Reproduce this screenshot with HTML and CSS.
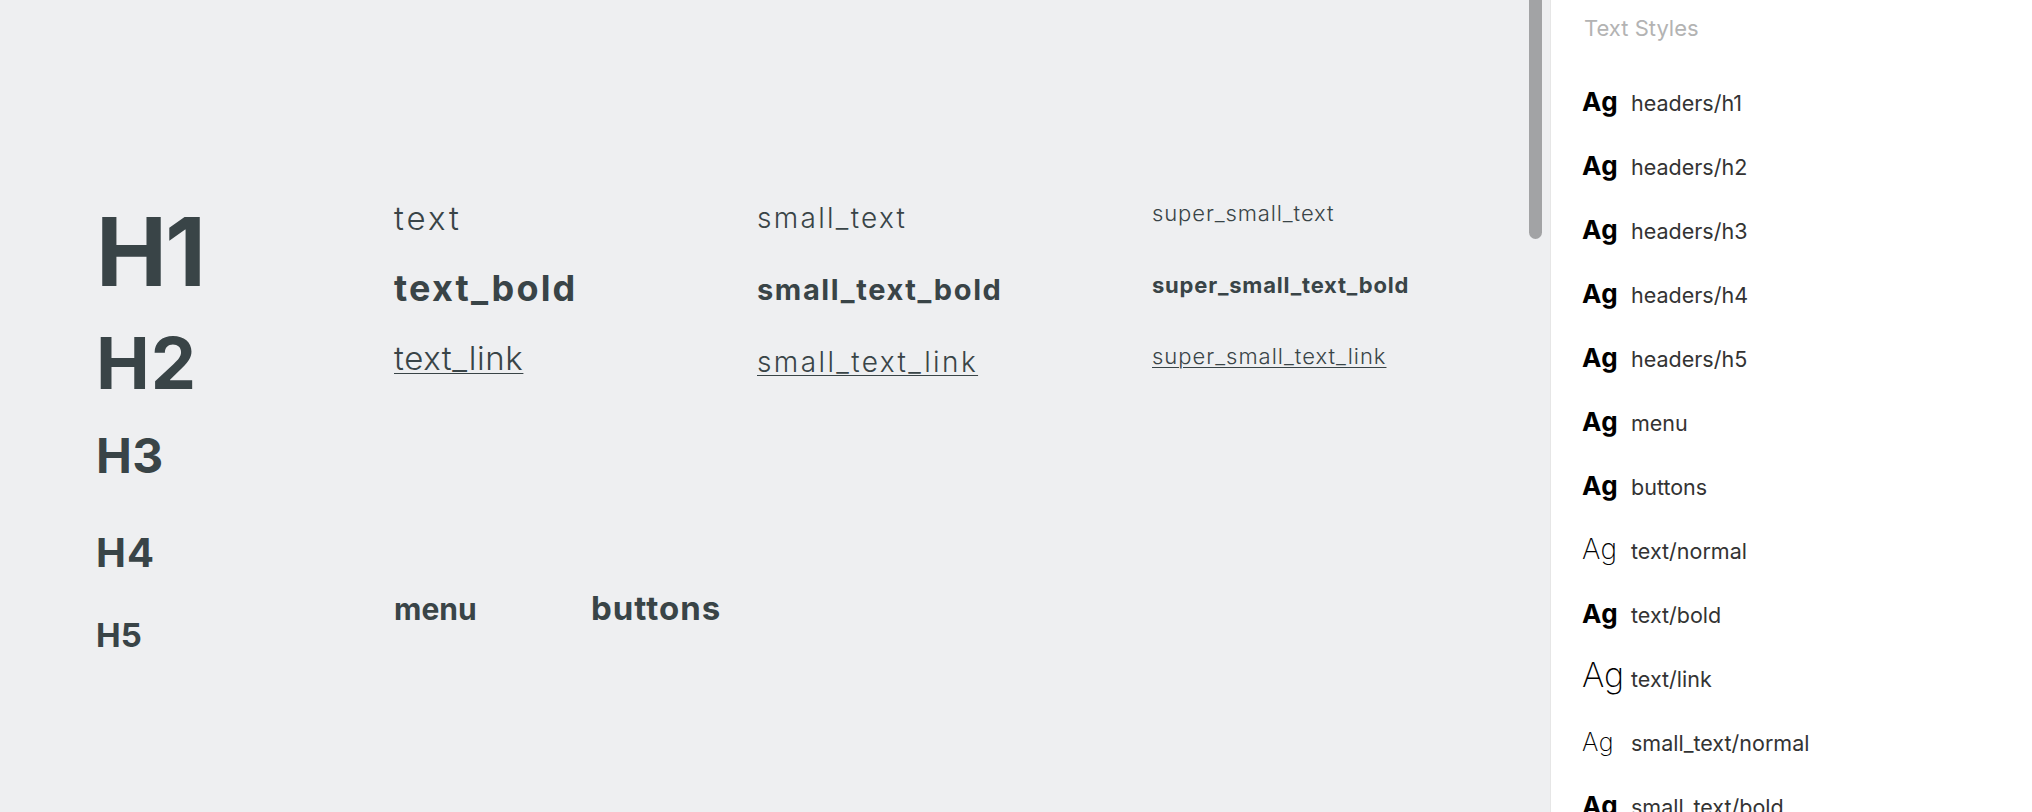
FILE: index.html
```html
<!DOCTYPE html>
<html lang="en">
<head>
<meta charset="utf-8">
<title>Text Styles</title>
<link rel="stylesheet" href="styles.css">
</head>
<body>
<div class="app">
  <main class="canvas">
    <div class="headings">
      <div class="h h1">H1</div>
      <div class="h h2">H2</div>
      <div class="h h3">H3</div>
      <div class="h h4">H4</div>
      <div class="h h5">H5</div>
    </div>
    <div class="body-styles">
      <div class="grid">
        <div class="col col-text">
          <div class="t-normal">text</div>
          <div class="t-bold">text_bold</div>
          <div class="t-link">text_link</div>
        </div>
        <div class="col col-small">
          <div class="s-normal">small_text</div>
          <div class="s-bold">small_text_bold</div>
          <div class="s-link">small_text_link</div>
        </div>
        <div class="col col-super">
          <div class="ss-normal">super_small_text</div>
          <div class="ss-bold">super_small_text_bold</div>
          <div class="ss-link">super_small_text_link</div>
        </div>
      </div>
      <div class="actions">
        <div class="menu">menu</div>
        <div class="buttons">buttons</div>
      </div>
    </div>
    <div class="scroll-thumb"></div>
  </main>
  <aside class="panel">
    <div class="panel-title">Text Styles</div>
    <ul class="style-list">
      <li class="style-row"><span class="ag ag-bold">Ag</span><span class="label">headers/h1</span></li>
      <li class="style-row"><span class="ag ag-bold">Ag</span><span class="label">headers/h2</span></li>
      <li class="style-row"><span class="ag ag-bold">Ag</span><span class="label">headers/h3</span></li>
      <li class="style-row"><span class="ag ag-bold">Ag</span><span class="label">headers/h4</span></li>
      <li class="style-row"><span class="ag ag-bold">Ag</span><span class="label">headers/h5</span></li>
      <li class="style-row"><span class="ag ag-bold">Ag</span><span class="label">menu</span></li>
      <li class="style-row"><span class="ag ag-bold">Ag</span><span class="label">buttons</span></li>
      <li class="style-row"><span class="ag ag-light">Ag</span><span class="label">text/normal</span></li>
      <li class="style-row"><span class="ag ag-bold">Ag</span><span class="label">text/bold</span></li>
      <li class="style-row"><span class="ag ag-light ag-large">Ag</span><span class="label">text/link</span></li>
      <li class="style-row"><span class="ag ag-light ag-small">Ag</span><span class="label">small_text/normal</span></li>
      <li class="style-row"><span class="ag ag-bold">Ag</span><span class="label">small_text/bold</span></li>
    </ul>
  </aside>
</div>
</body>
</html>
```

FILE: styles.css
```css
* { box-sizing: border-box; }
html, body { margin: 0; padding: 0; }
body {
  width: 2032px;
  height: 812px;
  overflow: hidden;
  font-family: "Inter", "Noto Sans", sans-serif;
}
.app {
  display: flex;
  height: 812px;
}

/* ---------- canvas ---------- */
.canvas {
  position: relative;
  width: 1550px;
  flex: none;
  height: 812px;
  background: #eeeff1;
  color: #394447;
  display: flex;
  padding-left: 96px;
}
.headings {
  width: 298px;
  flex: none;
  padding-top: 204px;
  font-weight: 700;
}
.h { line-height: 1; }
.h1 { font-size: 95px; letter-spacing: -2px; }
.h2 { font-size: 72px; margin-top: 28px; letter-spacing: 1px; }
.h3 { font-size: 48px; margin-top: 33px; letter-spacing: 0.5px; }
.h4 { font-size: 40px; margin-top: 53px; letter-spacing: 1px; }
.h5 { font-size: 33px; margin-top: 46px; letter-spacing: 0; }

.body-styles {
  flex: 1;
  padding-top: 176px;
}
.grid {
  display: grid;
  grid-template-columns: 363px 395px 1fr;
}
.col { display: flex; flex-direction: column; }
.col-text { padding-top: 7px; line-height: 70px; }
.col-small { padding-top: 6px; line-height: 72px; }
.col-super { padding-top: 2px; line-height: 71.5px; }

.t-normal { font-size: 33px; font-weight: 300; letter-spacing: 3px; }
.t-link { font-size: 33px; font-weight: 300; letter-spacing: 0.6px; }
.t-bold { font-size: 36px; font-weight: 700; letter-spacing: 2.2px; }
.s-normal { font-size: 28px; font-weight: 300; letter-spacing: 2.3px; }
.s-link { font-size: 28px; font-weight: 300; letter-spacing: 2.4px; }
.s-bold { font-size: 29px; font-weight: 700; letter-spacing: 1.6px; }
.ss-normal { font-size: 22px; font-weight: 300; letter-spacing: 0.9px; }
.ss-link { font-size: 22px; font-weight: 300; letter-spacing: 1px; }
.ss-bold { font-size: 22px; font-weight: 700; letter-spacing: 0.8px; }
.t-link, .s-link, .ss-link {
  text-decoration: underline;
  text-decoration-thickness: 1px;
  text-underline-offset: 3px;
}

.actions {
  display: grid;
  grid-template-columns: 197px auto;
  align-items: baseline;
  margin-top: 194px;
  font-weight: 700;
  line-height: 1;
}
.menu { font-size: 30px; }
.buttons { font-size: 33px; letter-spacing: 1px; }

.scroll-thumb {
  position: absolute;
  top: -10px;
  left: 1529px;
  width: 13px;
  height: 249px;
  border-radius: 7px;
  background: #a2a3a5;
}

/* ---------- panel ---------- */
.panel {
  flex: 1;
  height: 812px;
  background: #ffffff;
  border-left: 1px solid #e6e6e6;
  padding-left: 31px;
  overflow: hidden;
}
.panel-title {
  padding-top: 16px;
  padding-left: 2px;
  font-size: 22px;
  line-height: 24px;
  color: #b3b3b3;
}
.style-list {
  list-style: none;
  margin: 31px 0 0;
  padding: 0;
}
.style-row {
  height: 64px;
  line-height: 64px;
  font-size: 21.5px;
  color: #333333;
  white-space: nowrap;
}
.ag {
  display: inline-block;
  width: 49px;
  line-height: 1;
  color: #000000;
}
.ag-bold { font-size: 26px; font-weight: 700; letter-spacing: 0.5px; }
.ag-light { font-size: 28px; font-weight: 200; letter-spacing: 0.5px; }
.ag-large { font-size: 34px; letter-spacing: 0; }
.ag-small { font-size: 25px; }
.label { font-size: 21.5px; }
```
